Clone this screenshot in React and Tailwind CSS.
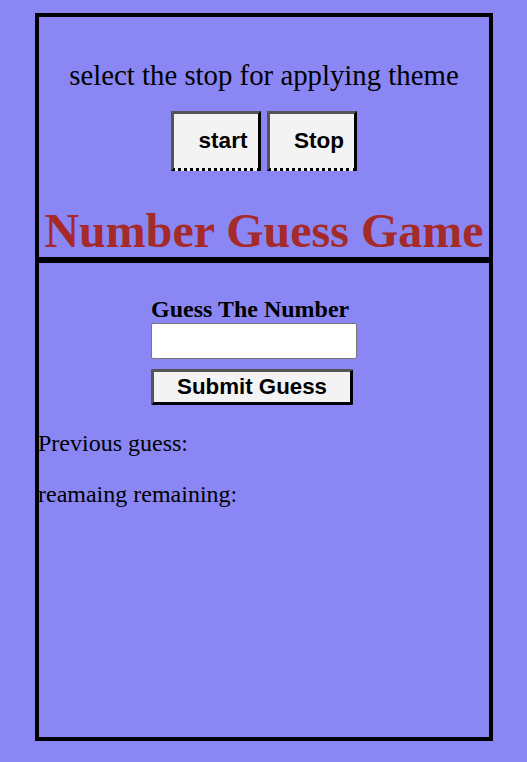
const App = () => {
  return (
    <div className="min-h-[762px] bg-[#8a87f4] pt-[13px] pb-[21px] [font-family:'Liberation_Serif',serif] text-black">
      <div className="ml-[35px] flex h-[728px] w-[458px] flex-col border-4 border-black">
        <header className="flex flex-col items-center border-b-[3px] border-black">
          <p className="mt-[42px] text-[28.8px] leading-[33px]">select the stop for applying theme</p>
          <div className="mt-[19px] flex gap-[6px]">
            <button className="flex h-[60px] w-[90px] items-center justify-center border-[3px] border-t-[#555] border-l-[#555] border-r-black border-b-black bg-[#f3f3f3] pl-[14px] text-[22.5px] font-bold [font-family:'Liberation_Sans',sans-serif] [border-bottom-style:dotted]">
              start
            </button>
            <button className="flex h-[60px] w-[90px] items-center justify-center border-[3px] border-t-[#555] border-l-[#555] border-r-black border-b-black bg-[#f3f3f3] pl-[14px] text-[22.5px] font-bold [font-family:'Liberation_Sans',sans-serif] [border-bottom-style:dotted]">
              Stop
            </button>
          </div>
          <h1 className="mt-[33px] text-[48px] leading-[53px] font-bold text-[#a52a2a]">Number Guess Game</h1>
        </header>
        <section className="flex-1 border-t-[3px] border-black">
          <div className="ml-[112px] mt-[33px] flex flex-col items-start">
            <label className="text-[24px] leading-[27px] font-bold">Guess The Number</label>
            <input className="h-[36px] w-[206px] rounded-[2px] border border-[#767676] bg-white" />
            <button className="mt-[10px] h-[36px] w-[202px] rounded-[2px] border-[3px] border-t-[#555] border-l-[#555] border-r-black border-b-black bg-[#f3f3f3] text-[22.3px] leading-none font-bold [font-family:'Liberation_Sans',sans-serif]">
              Submit Guess
            </button>
          </div>
          <p className="-ml-[1px] mt-[25px] text-[24px] leading-[27px]">Previous guess:</p>
          <p className="-ml-[1px] mt-[24px] text-[24px] leading-[27px]">reamaing remaining:</p>
        </section>
      </div>
    </div>
  );
};

export default App;
